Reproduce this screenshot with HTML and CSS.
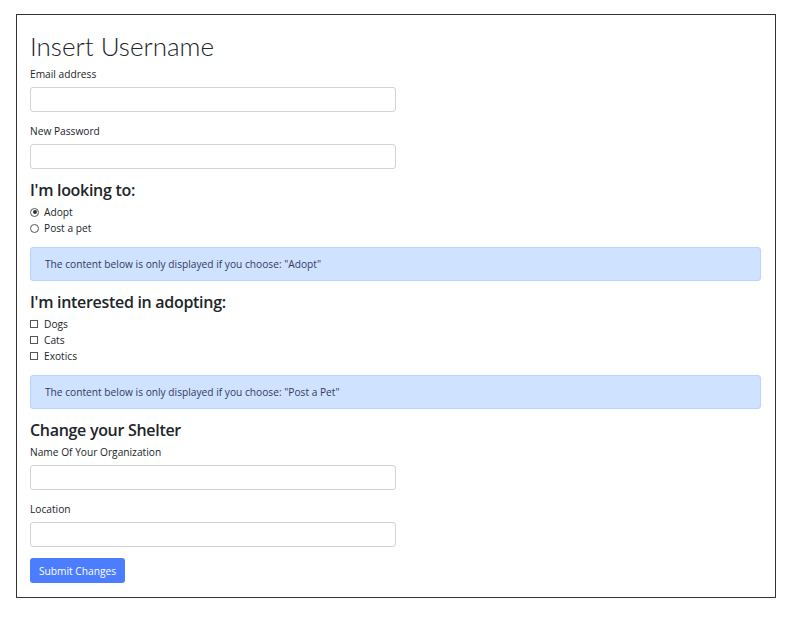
FILE: index.html
```html
<!DOCTYPE html>
<html>
<head>
<meta charset="utf-8">
<link rel="stylesheet" href="styles.css">
</head>
<body>
<div class="card">
  <h1 class="title">Insert Username</h1>
  <div class="field">
    <label class="label">Email address</label>
    <input class="input" type="email">
  </div>
  <div class="field">
    <label class="label">New Password</label>
    <input class="input" type="password">
  </div>
  <h2 class="heading">I'm looking to:</h2>
  <div class="options">
    <label class="option"><input type="radio" name="look" class="radio" checked> Adopt</label>
    <label class="option"><input type="radio" name="look" class="radio"> Post a pet</label>
  </div>
  <div class="alert">The content below is only displayed if you choose: "Adopt"</div>
  <h2 class="heading">I'm interested in adopting:</h2>
  <div class="options">
    <label class="option"><input type="checkbox" class="check"> Dogs</label>
    <label class="option"><input type="checkbox" class="check"> Cats</label>
    <label class="option"><input type="checkbox" class="check"> Exotics</label>
  </div>
  <div class="alert">The content below is only displayed if you choose: "Post a Pet"</div>
  <h2 class="heading">Change your Shelter</h2>
  <div class="field">
    <label class="label">Name Of Your Organization</label>
    <input class="input" type="text">
  </div>
  <div class="field">
    <label class="label">Location</label>
    <input class="input" type="text">
  </div>
  <button class="btn">Submit Changes</button>
</div>
</body>
</html>
```
FILE: styles.css
```css
* { box-sizing: border-box; }
body {
  margin: 0;
  font-family: "Open Sans", "Noto Sans", sans-serif;
  color: #212529;
  background: #fff;
}
.card {
  margin: 14px 0 0 16px;
  width: 760px;
  border: 1px solid #333;
  padding: 12px 14px 14px 13px;
}
.title {
  margin: 0;
  font-family: Lato, "Open Sans", sans-serif;
  font-size: 26px;
  font-weight: 300;
  line-height: 39px;
  color: #212529;
}
.field {
  display: flex;
  flex-direction: column;
  margin-bottom: 11px;
}
.label {
  font-size: 10.2px;
  line-height: 16px;
  margin-bottom: 5px;
}
.input {
  width: 366px;
  height: 25px;
  border: 1px solid #ced4da;
  border-radius: 3px;
  background: #fff;
  margin: 0;
}
.heading {
  margin: 2px 0 4px;
  font-size: 16px;
  font-weight: 600;
  letter-spacing: -0.3px;
  line-height: 20px;
  color: #212529;
}
.options {
  display: flex;
  flex-direction: column;
}
.option {
  font-size: 10.2px;
  line-height: 16px;
  display: flex;
  align-items: center;
  gap: 5px;
}
.radio, .check {
  appearance: none;
  margin: 0;
  width: 9px;
  height: 9px;
  border: 1px solid #555;
  background: #fff;
  position: relative;
}
.check { width: 8px; height: 8px; margin-right: 1px; }
.radio { border-radius: 50%; }
.radio:checked::after {
  content: "";
  position: absolute;
  left: 1.5px; top: 1.5px;
  width: 4px; height: 4px;
  border-radius: 50%;
  background: #333;
}
.alert {
  margin: 11px 0 11px;
  height: 34px;
  padding: 0 14px;
  display: flex;
  align-items: center;
  background: #cfe2ff;
  border: 1px solid #b6d4fe;
  border-radius: 3px;
  color: #343a5e;
  font-size: 10.2px;
}
.btn {
  display: block;
  height: 25px;
  padding: 0 9px;
  border: none;
  border-radius: 3px;
  background: #4c7dff;
  color: #fff;
  font-family: inherit;
  font-size: 10.2px;
}
```
